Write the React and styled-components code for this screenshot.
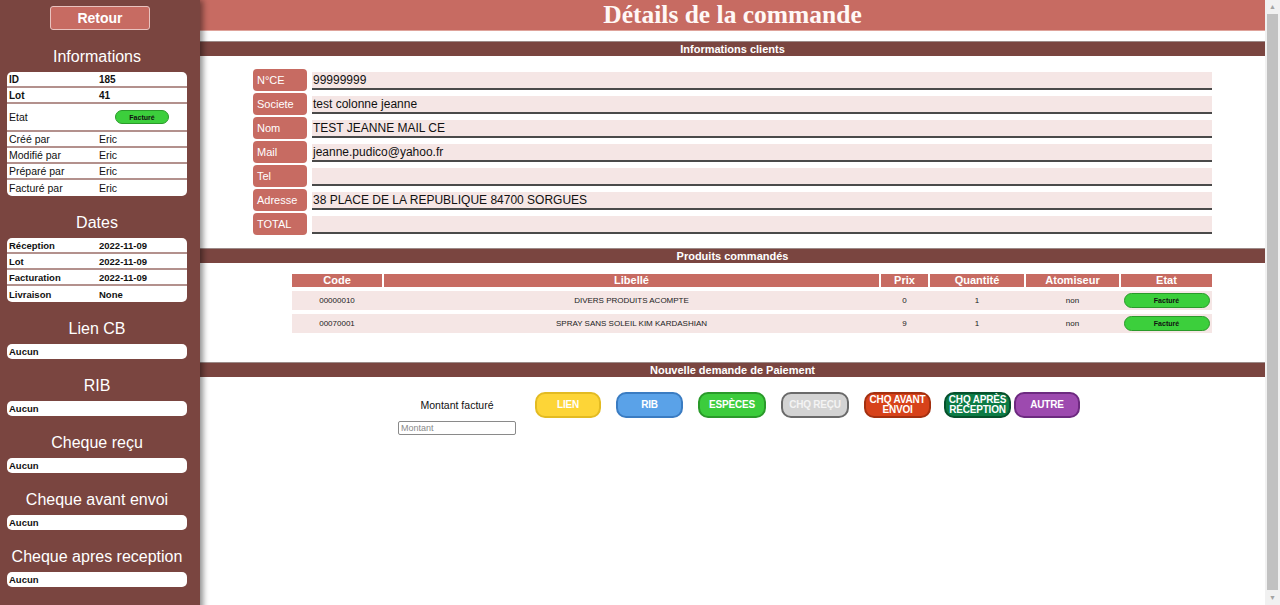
import React from "react"
import styled, { createGlobalStyle } from "styled-components"

const GlobalStyle = createGlobalStyle`
  html, body {
    margin: 0;
    padding: 0;
    background: #ffffff;
    font-family: "Liberation Sans", Arial, sans-serif;
  }
  * { box-sizing: border-box; }
`

const Layout = styled.div`
  display: flex;
  min-height: 100vh;
`

const Sidebar = styled.aside`
  width: 200px;
  flex-shrink: 0;
  background: #7a4540;
  padding: 6px 13px 60px 7px;
  display: flex;
  flex-direction: column;
  box-shadow: 3px 0 6px rgba(0, 0, 0, 0.45);
  position: relative;
  z-index: 1;
`

const BackButton = styled.button`
  width: 100px;
  height: 24px;
  margin-left: 43px;
  background: #c76b62;
  border: 1px solid #e9c3bf;
  border-radius: 3px;
  color: #ffffff;
  font-family: "Liberation Sans", Arial, sans-serif;
  font-weight: bold;
  font-size: 14px;
  padding: 0;
`

const SideTitle = styled.h2`
  margin: 16px 0 6px;
  height: 20px;
  line-height: 22px;
  font-size: 16px;
  font-weight: normal;
  color: #ffffff;
  text-align: center;
`

const Card = styled.div`
  background: #ffffff;
  border-radius: 5px;
  overflow: hidden;
`

const CardRow = styled.div`
  display: grid;
  grid-template-columns: 90px 1fr;
  align-items: center;
  height: ${p => p.$h || 16}px;
  padding: 0 2px;
  font-size: ${p => p.$size || 10.5}px;
  font-weight: ${p => (p.$bold ? "bold" : "normal")};
  color: #111;
  border-bottom: 2px solid #b3918d;
  &:last-child { border-bottom: none; }
`

const CenterCell = styled.div`
  display: flex;
  justify-content: center;
`

const Badge = styled.span`
  display: inline-flex;
  align-items: center;
  justify-content: center;
  width: ${p => p.$w || 54}px;
  height: ${p => p.$hh || 14}px;
  background: #3ccf3c;
  border: 1px solid #2a9a2a;
  border-radius: 8px;
  font-size: 7px;
  font-weight: bold;
  color: #111;
`

const Empty = styled.div`
  background: #ffffff;
  border-radius: 5px;
  height: 15px;
  line-height: 15px;
  padding: 0 2px;
  font-size: 9.5px;
  font-weight: bold;
  color: #111;
`

const Main = styled.main`
  flex: 1;
  display: flex;
  flex-direction: column;
`

const ScrollTrack = styled.div`
  width: 15px;
  height: 100vh;
  flex-shrink: 0;
  position: sticky;
  top: 0;
  background: #f1f1f1;
  display: flex;
  flex-direction: column;
  align-items: center;
  color: #a3a3a3;
  font-size: 7px;
  line-height: 14px;
`

const ScrollThumb = styled.div`
  flex: 1;
  width: 11px;
  margin-bottom: 1px;
  background: #c1c1c1;
`

const Header = styled.header`
  height: 31px;
  background: #c76b62;
  border-bottom: 1px solid #dfa39b;
  color: #fff8f6;
  font-family: "Liberation Serif", "Times New Roman", serif;
  font-weight: bold;
  font-size: 25.5px;
  text-align: center;
  line-height: 30px;
`

const SectionBar = styled.div`
  margin-top: ${p => p.$top}px;
  height: 15px;
  background: #7a4540;
  border-top: 1px solid #9c8a88;
  color: #ffffff;
  font-size: 11px;
  font-weight: bold;
  text-align: center;
  line-height: 14px;
`

const ClientList = styled.div`
  margin: 13px 53px 0;
  display: flex;
  flex-direction: column;
  gap: 2px;
`

const ClientRow = styled.div`
  display: flex;
  align-items: center;
  gap: 5px;
  height: 22px;
`

const ClientLabel = styled.div`
  width: 54px;
  height: 22px;
  flex-shrink: 0;
  background: #c76b62;
  border-radius: 4px;
  color: #ffffff;
  font-size: 11px;
  line-height: 22px;
  padding-left: 4px;
`

const ClientValue = styled.div`
  flex: 1;
  height: 18px;
  margin-top: 1px;
  background: #f5e6e5;
  border-bottom: 2px solid #4a4a4a;
  font-size: 12px;
  line-height: 16px;
  padding-left: 1px;
  color: #111;
`

const ProductTable = styled.div`
  margin: 11px 53px 0 92px;
  display: flex;
  flex-direction: column;
  gap: 4px;
`

const cols = "90px 495px 47px 94px 93px 91px"

const HeadRow = styled.div`
  display: grid;
  grid-template-columns: ${cols};
  column-gap: 2px;
`

const HeadCell = styled.div`
  background: #c76b62;
  color: #ffffff;
  font-size: 11px;
  font-weight: bold;
  text-align: center;
  height: 13px;
  line-height: 13px;
`

const BodyRow = styled.div`
  display: grid;
  grid-template-columns: ${cols};
  column-gap: 2px;
  background: #f5e6e5;
  height: 19px;
  align-items: center;
`

const BodyCell = styled.div`
  font-size: 8px;
  color: #222;
  text-align: center;
  display: flex;
  justify-content: center;
`

const Payment = styled.div`
  margin-top: 15px;
  padding-left: 198px;
  display: flex;
  align-items: flex-start;
`

const AmountGroup = styled.div`
  width: 118px;
  display: flex;
  flex-direction: column;
  align-items: center;
  margin-right: 19px;
`

const AmountLabel = styled.div`
  height: 26px;
  line-height: 26px;
  font-size: 10.5px;
  color: #111;
`

const AmountInput = styled.input`
  width: 118px;
  height: 14px;
  margin-top: 3px;
  border: 1px solid #8a8a8a;
  border-radius: 2px;
  padding: 0 2px;
  font-family: "Liberation Sans", Arial, sans-serif;
  font-size: 9px;
  &::placeholder { color: #8a8a8a; }
`

const PayButtons = styled.div`
  display: flex;
  gap: 15px;
`

const PayButton = styled.button`
  width: ${p => p.$w || 67}px;
  height: 26px;
  margin-left: ${p => p.$shift || 0}px;
  background: ${p => p.$bg};
  border: 2px solid ${p => p.$bd};
  border-radius: 10px;
  color: ${p => p.$fg || "#ffffff"};
  font-family: "Liberation Sans", Arial, sans-serif;
  font-weight: bold;
  font-size: 10px;
  line-height: 10px;
  letter-spacing: -0.2px;
  padding: 0 1px;
  text-transform: uppercase;
`

const infos = [
  { k: "ID", v: "185", bold: true },
  { k: "Lot", v: "41", bold: true },
  { k: "Etat", badge: true },
  { k: "Créé par", v: "Eric" },
  { k: "Modifié par", v: "Eric" },
  { k: "Préparé par", v: "Eric" },
  { k: "Facturé par", v: "Eric" },
]

const dates = [
  ["Réception", "2022-11-09"],
  ["Lot", "2022-11-09"],
  ["Facturation", "2022-11-09"],
  ["Livraison", "None"],
]

const extras = ["Lien CB", "RIB", "Cheque reçu", "Cheque avant envoi", "Cheque apres reception"]

const client = [
  ["N°CE", "99999999"],
  ["Societe", "test colonne jeanne"],
  ["Nom", "TEST JEANNE MAIL CE"],
  ["Mail", "jeanne.pudico@yahoo.fr"],
  ["Tel", ""],
  ["Adresse", "38 PLACE DE LA REPUBLIQUE 84700 SORGUES"],
  ["TOTAL", ""],
]

const heads = ["Code", "Libellé", "Prix", "Quantité", "Atomiseur", "Etat"]

const products = [
  { code: "00000010", label: "DIVERS PRODUITS ACOMPTE", price: "0", qty: "1", atom: "non" },
  { code: "00070001", label: "SPRAY SANS SOLEIL KIM KARDASHIAN", price: "9", qty: "1", atom: "non" },
]

const buttons = [
  { t: "Lien", bg: "#fdd537", bd: "#e3bb22", w: 66 },
  { t: "RIB", bg: "#5aa2e8", bd: "#3a7cc2" },
  { t: "Espèces", bg: "#3ccc3c", bd: "#2a9a2a", w: 68 },
  { t: "Chq reçu", bg: "#d3d3d3", bd: "#6a6a6a", fg: "#f4f4f4", w: 68 },
  { t: "Chq avant envoi", bg: "#d7421a", bd: "#a33010" },
  { t: "Chq après réception", bg: "#0c7b45", bd: "#06502c", shift: -2 },
  { t: "Autre", bg: "#9d4aaf", bd: "#6d2a80", w: 66, shift: -12 },
]

export default function App() {
  return (
    <Layout>
      <GlobalStyle />
      <Sidebar>
        <BackButton>Retour</BackButton>
        <SideTitle>Informations</SideTitle>
        <Card>
          {infos.map(r => (
            <CardRow key={r.k} $bold={r.bold} $size={r.bold ? 10 : 10.5} $h={r.badge ? 28 : 16}>
              <span>{r.k}</span>
              {r.badge
                ? <CenterCell><Badge>Facturé</Badge></CenterCell>
                : <span>{r.v}</span>}
            </CardRow>
          ))}
        </Card>
        <SideTitle>Dates</SideTitle>
        <Card>
          {dates.map(([k, v]) => (
            <CardRow key={k} $bold $size={9.5}>
              <span>{k}</span>
              <span>{v}</span>
            </CardRow>
          ))}
        </Card>
        {extras.map(t => (
          <React.Fragment key={t}>
            <SideTitle>{t}</SideTitle>
            <Empty>Aucun</Empty>
          </React.Fragment>
        ))}
      </Sidebar>
      <Main>
        <Header>Détails de la commande</Header>
        <SectionBar $top={10}>Informations clients</SectionBar>
        <ClientList>
          {client.map(([k, v]) => (
            <ClientRow key={k}>
              <ClientLabel>{k}</ClientLabel>
              <ClientValue>{v}</ClientValue>
            </ClientRow>
          ))}
        </ClientList>
        <SectionBar $top={13}>Produits commandés</SectionBar>
        <ProductTable>
          <HeadRow>
            {heads.map(h => <HeadCell key={h}>{h}</HeadCell>)}
          </HeadRow>
          {products.map(p => (
            <BodyRow key={p.code}>
              <BodyCell>{p.code}</BodyCell>
              <BodyCell>{p.label}</BodyCell>
              <BodyCell>{p.price}</BodyCell>
              <BodyCell>{p.qty}</BodyCell>
              <BodyCell>{p.atom}</BodyCell>
              <BodyCell><Badge $w={86} $hh={15}>Facturé</Badge></BodyCell>
            </BodyRow>
          ))}
        </ProductTable>
        <SectionBar $top={29}>Nouvelle demande de Paiement</SectionBar>
        <Payment>
          <AmountGroup>
            <AmountLabel>Montant facturé</AmountLabel>
            <AmountInput placeholder="Montant" />
          </AmountGroup>
          <PayButtons>
            {buttons.map(b => (
              <PayButton key={b.t} $bg={b.bg} $bd={b.bd} $fg={b.fg} $w={b.w} $shift={b.shift}>
                {b.t}
              </PayButton>
            ))}
          </PayButtons>
        </Payment>
      </Main>
      <ScrollTrack>
        <span>▲</span>
        <ScrollThumb />
        <span>▼</span>
      </ScrollTrack>
    </Layout>
  )
}
